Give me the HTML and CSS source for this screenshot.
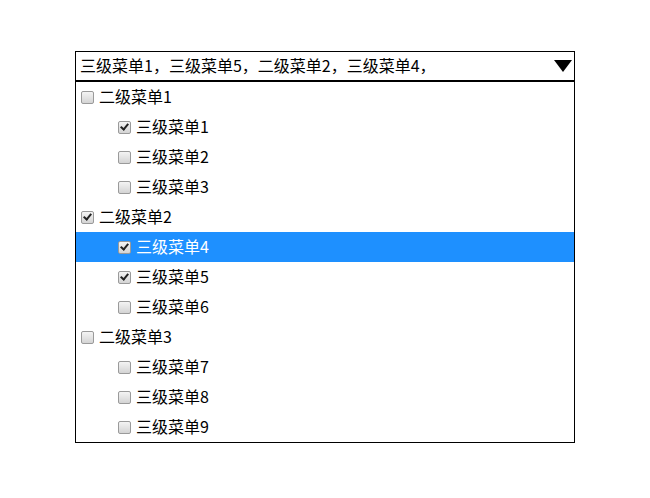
FILE: index.html
```html
<!DOCTYPE html>
<html lang="zh-CN">
<head>
    <meta charset="UTF-8">
    <title>多级下拉菜单</title>
    <link rel="stylesheet" href="styles.css">
</head>
<body>
<div class="select">
    <div class="select-head">
        <span class="select-value">三级菜单1，三级菜单5，二级菜单2，三级菜单4，</span>
        <svg class="arrow" width="18" height="12" viewBox="0 0 18 12"><path d="M0 0H18L9 12Z" fill="#000"/></svg>
    </div>
    <ul class="menu">
        <li class="lv2"><span class="cb"></span><span class="txt">二级菜单1</span></li>
        <li class="lv3"><span class="cb on"></span><span class="txt">三级菜单1</span></li>
        <li class="lv3"><span class="cb"></span><span class="txt">三级菜单2</span></li>
        <li class="lv3"><span class="cb"></span><span class="txt">三级菜单3</span></li>
        <li class="lv2"><span class="cb on"></span><span class="txt">二级菜单2</span></li>
        <li class="lv3 active"><span class="cb on"></span><span class="txt">三级菜单4</span></li>
        <li class="lv3"><span class="cb on"></span><span class="txt">三级菜单5</span></li>
        <li class="lv3"><span class="cb"></span><span class="txt">三级菜单6</span></li>
        <li class="lv2"><span class="cb"></span><span class="txt">二级菜单3</span></li>
        <li class="lv3"><span class="cb"></span><span class="txt">三级菜单7</span></li>
        <li class="lv3"><span class="cb"></span><span class="txt">三级菜单8</span></li>
        <li class="lv3"><span class="cb"></span><span class="txt">三级菜单9</span></li>
    </ul>
</div>
</body>
</html>
```

FILE: styles.css
```css
body {
    margin: 0;
    padding-top: 51px;
    background: #fff;
    font-family: "Noto Sans CJK SC", "DejaVu Sans", sans-serif;
    font-size: 16px;
    color: #000;
}

.select {
    width: 500px;
    margin: 0 auto;
    border: 1px solid #000;
    box-sizing: border-box;
}

.select-head {
    height: 28px;
    display: flex;
    align-items: center;
    justify-content: space-between;
    padding: 0 2px 0 4px;
    border-bottom: 2px solid #000;
}

.select-value {
    white-space: nowrap;
    line-height: 26px;
    margin-bottom: 2px;
}

.arrow {
    display: block;
}

.menu {
    list-style: none;
    margin: 0;
    padding: 0;
}

.menu li {
    height: 30px;
    display: flex;
    align-items: center;
    white-space: nowrap;
}

.menu li .txt {
    line-height: 20px;
    margin-top: -3px;
}

.menu li.lv2 {
    padding-left: 5px;
}

.menu li.lv3 {
    padding-left: 42px;
}

.menu li.active {
    background-color: #1e90ff;
    color: #fff;
}

.cb {
    width: 11px;
    height: 11px;
    margin-right: 5px;
    border: 1px solid #9a9a9a;
    border-radius: 2px;
    background: linear-gradient(#f4f4f4, #d4d4d4);
    position: relative;
    flex: none;
}

.cb.on::after {
    content: "";
    position: absolute;
    left: 3px;
    top: 0;
    width: 3px;
    height: 6px;
    border: solid #222;
    border-width: 0 2px 2px 0;
    transform: rotate(40deg);
}
```
